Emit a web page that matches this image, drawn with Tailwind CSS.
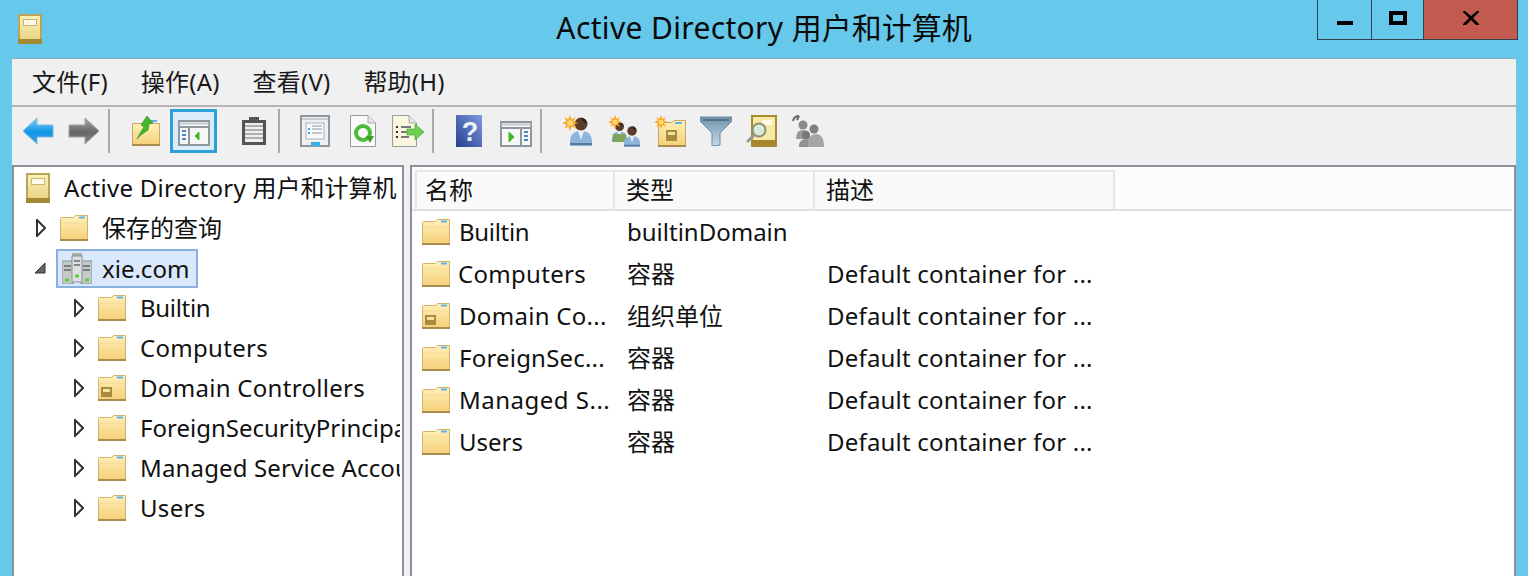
<!DOCTYPE html>
<html lang="zh-CN">
<head>
<meta charset="utf-8">
<title>Active Directory 用户和计算机</title>
<script src="https://cdn.jsdelivr.net/npm/@tailwindcss/browser@4"></script>
</head>
<body class="w-[1528px] h-[576px] overflow-hidden bg-[#66c8ea] text-[#111] text-[24px] font-['Noto_Sans','Noto_Sans_CJK_SC',sans-serif]">
<svg width="0" height="0" class="absolute">
  <defs>
    <linearGradient id="fg" x1="0" y1="0" x2="0" y2="1"><stop offset="0" stop-color="#fff0b8"/><stop offset="1" stop-color="#f5cf78"/></linearGradient>
    <linearGradient id="ad" x1="0" y1="0" x2="0" y2="1"><stop offset="0" stop-color="#fbf2b8"/><stop offset="1" stop-color="#e6cf80"/></linearGradient>
    <linearGradient id="bl" x1="0" y1="0" x2="0" y2="1"><stop offset="0" stop-color="#7cd0fa"/><stop offset=".55" stop-color="#0f94e6"/><stop offset="1" stop-color="#3aa6e6"/></linearGradient>
    <linearGradient id="gr" x1="0" y1="0" x2="0" y2="1"><stop offset="0" stop-color="#a8a8a8"/><stop offset=".55" stop-color="#666"/><stop offset="1" stop-color="#8a8a8a"/></linearGradient>
    <linearGradient id="fn" x1="0" y1="0" x2="0" y2="1"><stop offset="0" stop-color="#6f94ac"/><stop offset="1" stop-color="#c4dcea"/></linearGradient>
    <linearGradient id="hp" x1="0" y1="1" x2="1" y2="0"><stop offset="0" stop-color="#24408f"/><stop offset="1" stop-color="#7f9ae0"/></linearGradient>
    <symbol id="folder" viewBox="0 0 28 26">
      <path d="M.5 25.500V3.500Q.5 2.500 1.500 2.500H13.500L15.500 .5H27.500V25.500Z" fill="url(#fg)" stroke="#d4b26e"/>
      <path d="M1 8H27" stroke="#f3dc9a"/>
      <path d="M0 25H28" stroke="#a98b4e" stroke-width="2"/>
      <path d="M19 2.500H25" stroke="#5fb2ea" stroke-width="2"/>
    </symbol>
    <symbol id="ou" viewBox="0 0 28 26">
      <use href="#folder"/>
      <rect x="3" y="12" width="11" height="10" fill="#a98b3e"/>
      <rect x="5" y="14" width="7" height="3" fill="#f2e4a0"/>
    </symbol>
    <symbol id="adbook" viewBox="0 0 24 30">
      <rect x="0" y="0" width="24" height="30" fill="url(#ad)"/>
      <path d="M0 1H24M1 0V30M23 0V30" stroke="#bda35a" stroke-width="2"/>
      <rect x="0" y="25" width="24" height="5" fill="#a58834"/>
      <rect x="5.500" y="5.500" width="13" height="6" fill="#fffbe6" stroke="#c6b474"/>
    </symbol>
    <symbol id="person" viewBox="0 0 22 30">
      <circle cx="11" cy="8" r="6.500" fill="#5a3d28"/>
      <path d="M11 2a6 6 0 0 1 6 6l-3-2z" fill="#222"/>
      <path d="M0 30V24Q1 15 11 15 21 15 22 24V30Z" fill="#8db4dc"/>
      <path d="M8 15L11 24 14 15Z" fill="#e8f0f8"/>
      <path d="M0 28H22" stroke="#5a7a9c" stroke-width="2"/>
    </symbol>
    <symbol id="star" viewBox="0 0 14 14">
      <path d="M7 0L8.500 4 12 2 10 5.500 14 7 10 8.500 12 12 8.500 10 7 14 5.500 10 2 12 4 8.500 0 7 4 5.500 2 2 5.500 4Z" fill="#f9a51f"/>
      <circle cx="7" cy="7" r="2.500" fill="#ffd77a"/>
    </symbol>
    <symbol id="tri" viewBox="0 0 10 18"><path d="M1 1L9 9 1 17Z" fill="#fff" stroke="#333" stroke-width="2"/></symbol>
  </defs>
</svg>

<header class="h-[58px] grid grid-cols-[1fr_auto_1fr]">
  <div class="pl-[18px] pt-[14px]"><svg width="24" height="30"><use href="#adbook"/></svg></div>
  <h1 class="text-[30px] leading-[56px] font-normal text-[#0a0a0a]"><span class="tracking-[0.35px]">Active Directory </span>用户和计算机</h1>
  <div class="flex justify-end pr-[10px]">
    <div class="flex h-[40px] border-x border-b border-[#2f4450]">
      <div class="w-[54px] flex items-end justify-center pb-[14px] border-r border-[#2f4450]"><div class="w-[16px] h-[4px] bg-black"></div></div>
      <div class="w-[51px] flex justify-center pt-[11px]"><div class="w-[18px] h-[14px] border-[4px] border-black"></div></div>
      <div class="w-[94px] bg-[#c25a50] border-l border-[#2f4450] flex justify-center pt-[11px]">
        <svg width="16" height="14" viewBox="0 0 16 14"><path d="M2 0L8 5 14 0H16V1L10 7 16 13V14H13L8 9 3 14H0V13L6 7 0 1V0Z" fill="#000"/></svg>
      </div>
    </div>
  </div>
</header>

<main class="ml-[12px] w-[1504px] h-[518px] bg-[#f0f0f0] border-t border-[#8aa9bb] flex flex-col">
  <nav class="h-[46px] flex items-center gap-[33px] pl-[20px] text-[24px] leading-[46px] text-[#1a1a1a] tracking-[0.2px]">
    <span>文件(F)</span><span>操作(A)</span><span>查看(V)</span><span>帮助(H)</span>
  </nav>
  <div class="h-[2px] bg-[#b4b4b4]"></div>

  <div class="h-[58px] flex items-center pl-[10px] pb-[10px]">
    <svg width="32" height="28" viewBox="0 0 32 28"><path d="M1 14L15 1V8H31V20H15V27Z" fill="url(#bl)" stroke="#7fb6dc"/></svg>
    <svg class="ml-[14px]" width="32" height="28" viewBox="0 0 32 28"><path d="M31 14L17 1V8H1V20H17V27Z" fill="url(#gr)" stroke="#a0a0a0"/></svg>
    <div class="ml-[8px] w-[2px] h-[44px] bg-[#a8a8a8]"></div>
    <svg class="ml-[22px]" width="28" height="30" viewBox="0 0 28 30">
      <path d="M.5 29.500V7.500H27.500V29.500Z" fill="url(#fg)" stroke="#c8a862"/><path d="M0 29H28" stroke="#a98b4e" stroke-width="2"/>
      <path d="M17 5H25" stroke="#5fb2ea" stroke-width="2"/>
      <path d="M5 23Q9 15 12 11L9 9 15 0 21 7 17 8 16 14 9 19Z" fill="#43b82c" stroke="#2d8a1e" stroke-width=".6"/>
    </svg>
    <div class="ml-[10px] w-[47px] h-[44px] border-[3px] border-[#2ea0d8] bg-[#dcebfb] flex items-center justify-center">
      <svg class="mt-[4px]" width="32" height="26" viewBox="0 0 32 26">
        <rect x="1" y="1" width="30" height="24" fill="#f6f8f8" stroke="#8e969e" stroke-width="2"/>
        <path d="M1 7H31" stroke="#8e969e" stroke-width="2"/><path d="M1 3.500H31" stroke="#c5cace" stroke-width="2"/>
        <path d="M11 7V25" stroke="#8e969e" stroke-width="2"/>
        <path d="M4 11H8M4 15H8M4 19H8" stroke="#4a86c8" stroke-width="2"/>
        <path d="M17 16L21 12V20Z" fill="#43b82c" stroke="#43b82c"/>
      </svg>
    </div>
    <svg class="ml-[25px]" width="24" height="28" viewBox="0 0 24 28">
      <rect x="0" y="3" width="24" height="25" fill="#555"/><rect x="7" y="0" width="10" height="4" fill="#555"/>
      <rect x="3" y="6" width="18" height="19" fill="#eee"/>
      <path d="M3 9H21M3 13H21M3 17H21M3 21H21" stroke="#999" stroke-width="1.500"/>
    </svg>
    <div class="ml-[12px] w-[2px] h-[44px] bg-[#a8a8a8]"></div>
    <svg class="ml-[20px]" width="30" height="32" viewBox="0 0 30 32">
      <rect x="1" y="1" width="28" height="30" fill="#eef0f2" stroke="#8e969e" stroke-width="2"/>
      <path d="M2 4H28" stroke="#c5cace" stroke-width="2"/>
      <rect x="6" y="8" width="18" height="16" fill="#f8f9fa" stroke="#aab0b6"/>
      <path d="M8 14H10M8 18H10" stroke="#35a8e8" stroke-width="2"/><path d="M12 14H22M12 18H22M12 11H22" stroke="#8e969e"/>
      <rect x="11" y="27" width="9" height="4" fill="#35b0ec"/>
    </svg>
    <svg class="ml-[20px]" width="26" height="32" viewBox="0 0 26 32">
      <path d="M.5 .5H18L25.500 8V31.500H.5Z" fill="#fafafa" stroke="#9a9a9a"/>
      <path d="M18 .5V8H25.500" fill="#e4e4e4" stroke="#aaa"/>
      <circle cx="13" cy="18" r="7" fill="none" stroke="#4cbb3a" stroke-width="4"/>
      <path d="M16 21H24L20 28Z" fill="#3d9e2c"/>
    </svg>
    <svg class="ml-[16px]" width="32" height="32" viewBox="0 0 32 32">
      <path d="M.5 .5H17L24.500 8V31.500H.5Z" fill="#fbf6df" stroke="#9a9a9a"/>
      <path d="M17 .5V8H24.500" fill="#e4e4e4" stroke="#aaa"/>
      <path d="M4 12H6M4 17H6M4 22H6" stroke="#333" stroke-width="2"/><path d="M9 12H19M9 17H17M9 22H17" stroke="#777" stroke-width="2"/>
      <path d="M15 14H23V9L32 17 23 25V20H15Z" fill="#6ed04f" stroke="#48a834" stroke-width=".7"/>
    </svg>
    <div class="ml-[8px] w-[2px] h-[44px] bg-[#a8a8a8]"></div>
    <svg class="ml-[22px]" width="26" height="32" viewBox="0 0 26 32">
      <rect width="26" height="32" fill="url(#hp)"/>
      <text x="14" y="26" text-anchor="middle" font-size="27" font-weight="700" fill="#eef2fa" font-family="Liberation Sans">?</text>
    </svg>
    <svg class="ml-[18px] mt-[6px]" width="32" height="26" viewBox="0 0 32 26">
      <rect x="1" y="1" width="30" height="24" fill="#f6f8f8" stroke="#8e969e" stroke-width="2"/>
      <path d="M1 7H31" stroke="#8e969e" stroke-width="2"/><path d="M1 3.500H31" stroke="#c5cace" stroke-width="2"/>
      <path d="M21 7V25" stroke="#8e969e" stroke-width="2"/>
      <path d="M24 11H28M24 15H28M24 19H28" stroke="#4a86c8" stroke-width="2"/>
      <path d="M9 11L14 16 9 21Z" fill="#43b82c" stroke="#43b82c"/>
    </svg>
    <div class="ml-[8px] w-[2px] h-[44px] bg-[#a8a8a8]"></div>
    <svg class="ml-[20px]" width="30" height="32" viewBox="0 0 30 32">
      <use href="#person" x="8" y="1" width="22" height="30"/>
      <use href="#star" x="0" y="0" width="16" height="16"/>
    </svg>
    <svg class="ml-[16px]" width="32" height="32" viewBox="0 0 32 32">
      <use href="#person" x="4" y="6" width="15" height="21"/>
      <rect x="5" y="19" width="13" height="8" fill="#7ea55a"/>
      <use href="#person" x="16" y="10" width="16" height="22"/>
      <use href="#star" x="0" y="0" width="14" height="14"/>
    </svg>
    <svg class="ml-[14px]" width="32" height="32" viewBox="0 0 32 32">
      <path d="M4.500 31.500V7.500H18L20 5.500H31.500V31.500Z" fill="url(#fg)" stroke="#c8a862"/>
      <path d="M4 31H32" stroke="#a98b4e" stroke-width="2"/>
      <path d="M21 8H28" stroke="#5fb2ea" stroke-width="2"/>
      <rect x="12" y="15" width="11" height="11" fill="#a98b3e"/><rect x="14" y="17" width="7" height="3" fill="#f2e4a0"/>
      <use href="#star" x="0" y="0" width="14" height="14"/>
    </svg>
    <svg class="ml-[14px]" width="32" height="30" viewBox="0 0 32 30">
      <path d="M0 1H32V5L20 17V29L12 30V17L0 5Z" fill="url(#fn)" stroke="#6d8ba0"/>
      <path d="M3 4H29" stroke="#556f82" stroke-width="2"/>
    </svg>
    <svg class="ml-[14px]" width="32" height="32" viewBox="0 0 32 32">
      <rect x="6" y="1" width="24" height="30" fill="#f6e9a6" stroke="#a98b32" stroke-width="2"/>
      <rect x="6" y="25" width="24" height="6" fill="#a5862e"/>
      <rect x="16" y="5" width="10" height="5" fill="#fffbe6"/>
      <circle cx="13" cy="15" r="6.500" fill="#d8ecd8" stroke="#8d8d78" stroke-width="2"/>
      <path d="M8 20L1 27" stroke="#999" stroke-width="3"/>
    </svg>
    <svg class="ml-[14px]" width="32" height="32" viewBox="0 0 32 32">
      <path d="M1 6Q2 1 7 1M7 1L5 5" fill="none" stroke="#666" stroke-width="2"/>
      <circle cx="11" cy="10" r="4.500" fill="#8a8a8a"/><path d="M4 24Q4 15 11 15 18 15 18 24Z" fill="#9a9a9a"/>
      <circle cx="22" cy="14" r="4.500" fill="#808080"/><circle cx="14" cy="20" r="4" fill="#777"/>
      <path d="M7 32Q7 24 14 24 21 24 21 32Z" fill="#909090"/>
      <path d="M16 32Q16 19 24 19 32 19 32 32Z" fill="#a6a6a6"/>
    </svg>
  </div>

  <div class="flex-1 flex gap-[6px] min-h-0">
    <section class="w-[392px] bg-white border-x-[2px] border-t-[2px] border-[#8c9199] pt-[1px]">
      <div class="w-[386px] h-full overflow-hidden tracking-[0.3px]">
        <div class="h-[40px] flex items-center whitespace-nowrap pl-[12px]">
          <svg class="shrink-0" width="24" height="30"><use href="#adbook"/></svg>
          <span class="ml-[14px]">Active Directory <span class="tracking-normal">用户和计算机</span></span>
        </div>
        <div class="h-[40px] flex items-center whitespace-nowrap pl-[22px]">
          <svg class="shrink-0" width="10" height="18"><use href="#tri"/></svg>
          <svg class="shrink-0 ml-[14px]" width="28" height="26"><use href="#folder"/></svg>
          <span class="ml-[14px] tracking-normal">保存的查询</span>
        </div>
        <div class="h-[40px] flex items-center whitespace-nowrap pl-[20px]">
          <svg class="shrink-0" width="12" height="12" viewBox="0 0 12 12"><path d="M11 1V11H1Z" fill="#666" stroke="#333"/></svg>
          <div class="ml-[10px] h-[39px] mt-[1px] w-[142px] flex items-center bg-[#d9e8fb] border-[2px] border-[#8ab0e0] pl-[4px]">
            <svg class="shrink-0" width="30" height="31" viewBox="0 0 30 31">
              <rect x="10" y="0" width="10" height="28" fill="#a9b0b2"/>
              <rect x="0" y="8" width="11" height="23" fill="#c4cacc" stroke="#8a9193"/>
              <rect x="19" y="8" width="11" height="23" fill="#c4cacc" stroke="#8a9193"/>
              <rect x="10" y="3" width="10" height="26" fill="#dce0e1" stroke="#8a9193"/>
              <path d="M2 13H9M2 17H9M21 13H28M21 17H28M12 8H18M12 12H18" stroke="#666" stroke-width="1.500"/>
              <path d="M3 27H7M23 27H27M13 23H17" stroke="#5fd030" stroke-width="3"/>
            </svg>
            <span class="ml-[10px] tracking-normal">xie.com</span>
          </div>
        </div>
        <div class="h-[40px] flex items-center whitespace-nowrap pl-[60px]">
          <svg class="shrink-0" width="10" height="18"><use href="#tri"/></svg>
          <svg class="shrink-0 ml-[14px]" width="28" height="26"><use href="#folder"/></svg>
          <span class="ml-[14px] tracking-[-0.3px]">Builtin</span>
        </div>
        <div class="h-[40px] flex items-center whitespace-nowrap pl-[60px]">
          <svg class="shrink-0" width="10" height="18"><use href="#tri"/></svg>
          <svg class="shrink-0 ml-[14px]" width="28" height="26"><use href="#folder"/></svg>
          <span class="ml-[14px]">Computers</span>
        </div>
        <div class="h-[40px] flex items-center whitespace-nowrap pl-[60px]">
          <svg class="shrink-0" width="10" height="18"><use href="#tri"/></svg>
          <svg class="shrink-0 ml-[14px]" width="28" height="26"><use href="#ou"/></svg>
          <span class="ml-[14px]">Domain Controllers</span>
        </div>
        <div class="h-[40px] flex items-center whitespace-nowrap pl-[60px]">
          <svg class="shrink-0" width="10" height="18"><use href="#tri"/></svg>
          <svg class="shrink-0 ml-[14px]" width="28" height="26"><use href="#folder"/></svg>
          <span class="ml-[14px] tracking-normal">ForeignSecurityPrincipals</span>
        </div>
        <div class="h-[40px] flex items-center whitespace-nowrap pl-[60px]">
          <svg class="shrink-0" width="10" height="18"><use href="#tri"/></svg>
          <svg class="shrink-0 ml-[14px]" width="28" height="26"><use href="#folder"/></svg>
          <span class="ml-[14px] tracking-[0.15px]">Managed Service Accounts</span>
        </div>
        <div class="h-[40px] flex items-center whitespace-nowrap pl-[60px]">
          <svg class="shrink-0" width="10" height="18"><use href="#tri"/></svg>
          <svg class="shrink-0 ml-[14px]" width="28" height="26"><use href="#folder"/></svg>
          <span class="ml-[14px]">Users</span>
        </div>
      </div>
    </section>

    <section class="flex-1 bg-white border-l-[2px] border-t-[2px] border-r-[2px] border-[#8c9199] pt-[1px] overflow-hidden">
      <div class="h-[43px] pt-[2px] flex items-stretch border-b-[2px] border-[#e0e0e0] pl-[3px] mr-[2px] bg-[#fcfcfc]">
        <div class="w-[200px] pl-[8px] pb-[2px] bg-[#fafafa] border-[2px] border-b-0 border-[#e6e6e6] flex items-center">名称</div>
        <div class="w-[200px] pl-[11px] pb-[2px] bg-[#fafafa] border-[2px] border-b-0 border-l-0 border-[#e6e6e6] flex items-center">类型</div>
        <div class="w-[300px] pl-[11px] pb-[2px] bg-[#fafafa] border-[2px] border-b-0 border-l-0 border-[#e6e6e6] flex items-center">描述</div>
      </div>
      <div class="h-[42px] grid grid-cols-[215px_200px_1fr] items-center whitespace-nowrap">
        <div class="flex items-center pl-[10px]"><svg width="28" height="26"><use href="#folder"/></svg><span class="ml-[9px] tracking-[-0.3px]">Builtin</span></div><div>builtinDomain</div><div></div>
      </div>
      <div class="h-[42px] grid grid-cols-[215px_200px_1fr] items-center whitespace-nowrap">
        <div class="flex items-center pl-[10px]"><svg width="28" height="26"><use href="#folder"/></svg><span class="ml-[8px] tracking-[0.3px]">Computers</span></div><div>容器</div><div class="tracking-[0.2px]">Default container for ...</div>
      </div>
      <div class="h-[42px] grid grid-cols-[215px_200px_1fr] items-center whitespace-nowrap">
        <div class="flex items-center pl-[10px]"><svg width="28" height="26"><use href="#ou"/></svg><span class="ml-[9px] tracking-[0.3px]">Domain Co...</span></div><div>组织单位</div><div class="tracking-[0.2px]">Default container for ...</div>
      </div>
      <div class="h-[42px] grid grid-cols-[215px_200px_1fr] items-center whitespace-nowrap">
        <div class="flex items-center pl-[10px]"><svg width="28" height="26"><use href="#folder"/></svg><span class="ml-[9px] tracking-[0.2px]">ForeignSec...</span></div><div>容器</div><div class="tracking-[0.2px]">Default container for ...</div>
      </div>
      <div class="h-[42px] grid grid-cols-[215px_200px_1fr] items-center whitespace-nowrap">
        <div class="flex items-center pl-[10px]"><svg width="28" height="26"><use href="#folder"/></svg><span class="ml-[9px] tracking-[0.5px]">Managed S...</span></div><div>容器</div><div class="tracking-[0.2px]">Default container for ...</div>
      </div>
      <div class="h-[42px] grid grid-cols-[215px_200px_1fr] items-center whitespace-nowrap">
        <div class="flex items-center pl-[10px]"><svg width="28" height="26"><use href="#folder"/></svg><span class="ml-[9px]">Users</span></div><div>容器</div><div class="tracking-[0.2px]">Default container for ...</div>
      </div>
    </section>
  </div>
</main>
</body>
</html>
